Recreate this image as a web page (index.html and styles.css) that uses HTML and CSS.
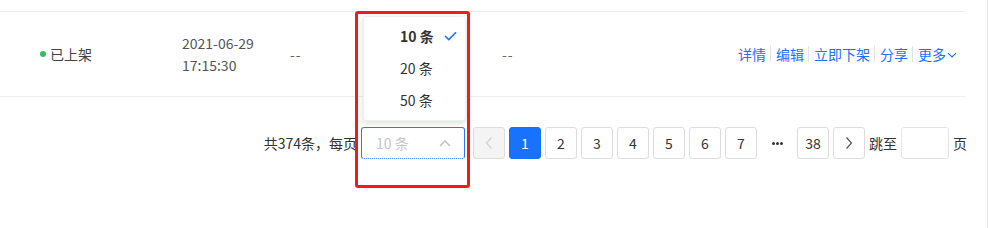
FILE: index.html
```html
<!DOCTYPE html>
<html>
<head>
<meta charset="utf-8">
<link rel="stylesheet" href="styles.css">
</head>
<body>
<div class="page">
  <div class="table">
    <div class="row">
      <div class="cell status"><span class="dot"></span>已上架</div>
      <div class="cell date"><div>2021-06-29</div><div>17:15:30</div></div>
      <div class="cell dash1">--</div>
      <div class="cell dash2">--</div>
      <div class="cell actions">
        <a>详情</a><i class="sep"></i><a>编辑</a><i class="sep"></i><a>立即下架</a><i class="sep"></i><a>分享</a><i class="sep"></i><a class="more">更多<svg width="10" height="10" viewBox="0 0 10 10"><path d="M1 3.2 L5 7 L9 3.2" fill="none" stroke="#1e6fff" stroke-width="1.1"/></svg></a>
      </div>
    </div>
  </div>
  <div class="pager">
    <span class="total">共374条，每页</span>
    <div class="select">
      <span class="ph">10 条</span>
      <svg class="arrow" width="12" height="8" viewBox="0 0 12 8"><path d="M1 7 L6 2 L11 7" fill="none" stroke="#b8bcc4" stroke-width="1.3"/></svg>
    </div>
    <div class="pbtn disabled"><svg width="10" height="14" viewBox="0 0 10 14"><path d="M7.5 1.5 L2.5 7 L7.5 12.5" fill="none" stroke="#d0d0d0" stroke-width="1.2"/></svg></div>
    <div class="pbtn active">1</div>
    <div class="pbtn">2</div>
    <div class="pbtn">3</div>
    <div class="pbtn">4</div>
    <div class="pbtn">5</div>
    <div class="pbtn">6</div>
    <div class="pbtn">7</div>
    <div class="ellipsis"><i></i><i></i><i></i></div>
    <div class="pbtn">38</div>
    <div class="pbtn"><svg width="10" height="14" viewBox="0 0 10 14"><path d="M2.5 1.5 L7.5 7 L2.5 12.5" fill="none" stroke="#555" stroke-width="1.2"/></svg></div>
    <span class="jump">跳至</span>
    <div class="jinput"></div>
    <span class="jump">页</span>
  </div>

  <div class="dropdown">
    <div class="opt sel">10 条<svg class="check" width="13" height="10" viewBox="0 0 13 10"><path d="M1 5 L4.8 8.6 L12 1.2" fill="none" stroke="#1e6fff" stroke-width="1.6"/></svg></div>
    <div class="opt">20 条</div>
    <div class="opt">50 条</div>
  </div>
  <div class="redbox"></div>
</div>
</body>
</html>
```
FILE: styles.css
```css
* { box-sizing: border-box; }
html, body { margin: 0; padding: 0; background: #fff; }
body {
  font-family: "Noto Sans CJK SC", "Microsoft YaHei", sans-serif;
  font-size: 14px;
  color: #333;
}
.page {
  position: relative;
  width: 988px;
  height: 228px;
  border-right: 1px solid #ececec;
  padding-top: 11px;
}
.table {
  width: 966px;
}
.row {
  display: flex;
  align-items: center;
  height: 86px;
  border-top: 1px solid #ebeef5;
  border-bottom: 1px solid #ebeef5;
}
.cell { line-height: 22px; color: #555; }
.status {
  display: flex;
  align-items: center;
  padding-left: 40px;
  width: 182px;
  color: #444;
}
.dot {
  width: 6px;
  height: 6px;
  border-radius: 50%;
  background: #2bc45a;
  margin-right: 4px;
}
.date { width: 108px; }
.dash1 { width: 212px; color: #666; letter-spacing: 1px; }
.dash2 { width: 236px; color: #666; letter-spacing: 1px; }
.actions {
  display: flex;
  align-items: center;
  color: #1e6fff;
}
.actions a { color: #1e6fff; }
.sep {
  display: inline-block;
  width: 1px;
  height: 16px;
  background: #e4e4e4;
  margin: 0 5px 0 4px;
}
.more { display: flex; align-items: center; }
.more svg { margin-left: 1px; margin-top: 2px; }

.pager {
  display: flex;
  align-items: center;
  justify-content: flex-end;
  width: 967px;
  margin-top: 30px;
  height: 32px;
}
.total { margin-right: 4px; color: #333; }
.select {
  position: relative;
  width: 104px;
  height: 32px;
  border: 1px solid #2a78ff;
  border-bottom: 1px dotted #2a78ff;
  border-radius: 3px;
  display: flex;
  align-items: center;
  padding-left: 14px;
  margin-right: 8px;
}
.ph { color: #c3c6cc; }
.arrow { position: absolute; right: 13px; top: 11px; }
.pbtn {
  width: 32px;
  height: 32px;
  border: 1px solid #dcdcdc;
  border-radius: 3px;
  display: flex;
  align-items: center;
  justify-content: center;
  margin-right: 4px;
  color: #333;
  font-size: 14px;
}
.pbtn.disabled { background: #f4f4f4; }
.pbtn.active { background: #1773ff; border-color: #1773ff; color: #fff; }
.ellipsis {
  width: 32px;
  height: 32px;
  margin-right: 4px;
  display: flex;
  align-items: center;
  justify-content: center;
  gap: 1px;
  padding-top: 1px;
}
.ellipsis i {
  width: 3px;
  height: 3px;
  border-radius: 50%;
  background: #333;
}
.jump { color: #333; }
.jinput {
  width: 48px;
  height: 32px;
  border: 1px solid #e4e4e4;
  border-radius: 3px;
  margin: 0 4px;
}

.dropdown {
  position: absolute;
  left: 363px;
  top: 16px;
  width: 103px;
  height: 105px;
  background: #fff;
  border: 1px solid #f0f0f0;
  border-radius: 3px;
  box-shadow: 0 2px 6px rgba(0,0,0,0.14);
  padding-top: 3px;
}
.opt {
  height: 32px;
  display: flex;
  align-items: center;
  padding-left: 36px;
  color: #333;
}
.opt.sel { font-weight: bold; }
.check { margin-left: 10px; }
.redbox {
  position: absolute;
  left: 355px;
  top: 11px;
  width: 115px;
  height: 177px;
  border: 3px solid #f51a1a;
  border-radius: 3px;
}
```
